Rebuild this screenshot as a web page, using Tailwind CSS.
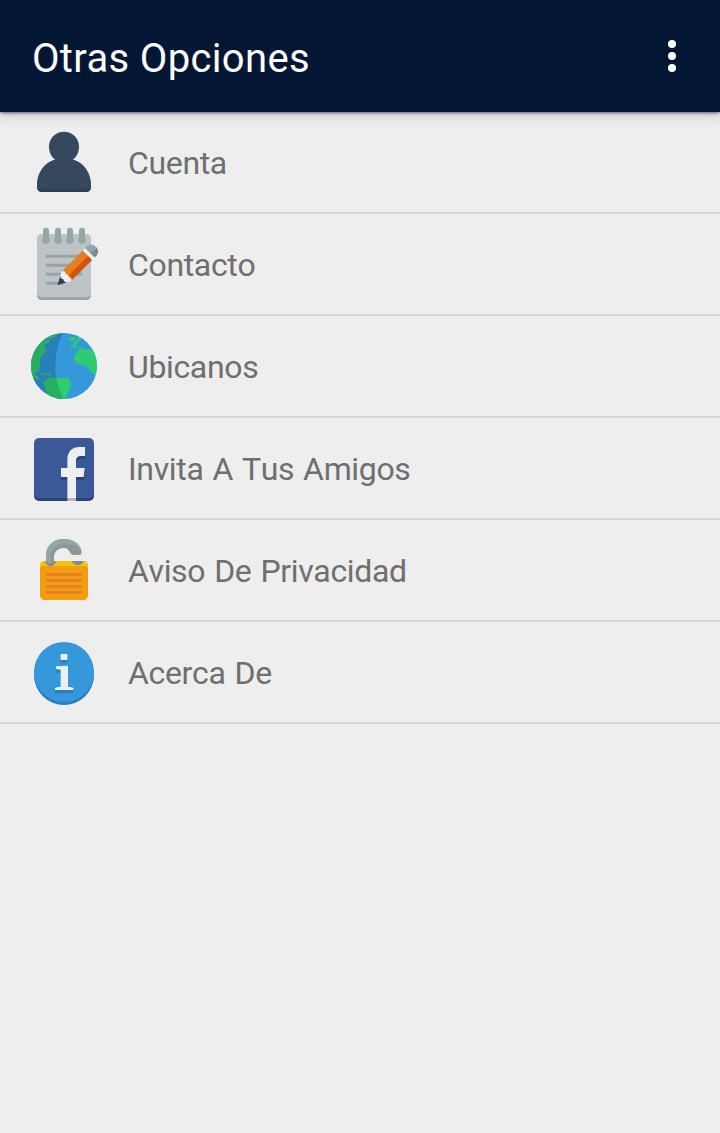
<!DOCTYPE html>
<html lang="es">
<head>
    <meta charset="UTF-8">
    <meta name="viewport" content="width=device-width, initial-scale=1.0">
    <title>Otras Opciones</title>
    <script src="https://cdn.jsdelivr.net/npm/@tailwindcss/browser@4"></script>
</head>
<body class="bg-[#eeeeee] min-h-screen font-['Roboto',sans-serif]">

    <!-- App bar -->
    <header class="relative h-28 bg-[#031633] flex items-center justify-between pl-8 pr-11 shadow-[0_1px_3px_rgba(0,0,0,0.55),0_4px_12px_rgba(0,0,0,0.15)]">
        <h1 class="text-[40px] leading-none tracking-[0.35px] text-white pt-1.5">Otras Opciones</h1>
        <button class="flex flex-col gap-1" aria-label="Menú">
            <span class="size-2 rounded-full bg-white"></span>
            <span class="size-2 rounded-full bg-white"></span>
            <span class="size-2 rounded-full bg-white"></span>
        </button>
    </header>

    <!-- Options -->
    <ul class="text-[32px] leading-none tracking-[-0.35px] [word-spacing:1.4px] [font-kerning:none] text-[#6f6f6f]">
        <li class="h-[102px] border-b-2 border-[#d6d6d6] flex items-center gap-6 pl-6">
            <svg class="size-20" viewBox="0 0 240 240">
                <path fill="#2c3e50" d="M39 196C39 155 62 122 90 114H150C178 122 201 155 201 196Q201 210 187 210H53Q39 210 39 196Z"/>
                <path fill="#34495e" d="M39 189C39 152 60 122 93 113C82 104 75 90 75 74A45 45 0 0 1 165 74C165 90 158 104 147 113C180 122 201 152 201 189Q201 202 188 202H52Q39 202 39 189Z"/>
            </svg>
            <span class="pt-0.5">Cuenta</span>
        </li>
        <li class="h-[102px] border-b-2 border-[#d6d6d6] flex items-center gap-6 pl-6">
            <svg class="size-20" viewBox="0 0 240 240">
                <rect x="39" y="36" width="162" height="192" rx="14" fill="#95a5a6"/>
                <rect x="39" y="30" width="162" height="190" rx="14" fill="#bdc3c7"/>
                <g fill="#a2acb0">
                    <circle cx="66" cy="48" r="12"/><circle cx="102" cy="48" r="12"/><circle cx="138" cy="48" r="12"/><circle cx="174" cy="48" r="12"/>
                </g>
                <path stroke="#95a5a6" stroke-width="18" stroke-linecap="round" d="M66 20V47M102 20V47M138 20V47M174 20V47"/>
                <path stroke="#95a5a6" stroke-width="9" d="M66 97H174M66 124H174M66 151H174M66 178H120"/>
                <!-- pencil, drawn flat with the tip at the origin -->
                <g transform="translate(100 184) rotate(-45)">
                    <path fill="#ecf0f1" d="M0 0L36 -19H54V19H36Z"/>
                    <path fill="#2c3e50" d="M0 0L27 -14Q20 -6 26 0Q20 6 27 14Z"/>
                    <path fill="#e67e22" d="M40 -20Q49 -14 41 -6Q49 0 41 6L128 5V-20Z"/>
                    <path fill="#d35400" d="M44 3Q49 7 41 8Q49 14 40 20H128V3Z"/>
                    <path fill="#ecf0f1" d="M128 -20H138V20H128Z"/>
                    <path fill="#95a5a6" d="M138 -20H148Q164 -17 164 4H138Z"/>
                    <path fill="#7f8c8d" d="M138 3H164Q162 17 148 20H138Z"/>
                </g>
            </svg>
            <span class="pt-0.5">Contacto</span>
        </li>
        <li class="h-[102px] border-b-2 border-[#d6d6d6] flex items-center gap-6 pl-6">
            <svg class="size-20" viewBox="0 0 240 240">
                <clipPath id="globe"><circle cx="120" cy="120" r="99"/></clipPath>
                <g clip-path="url(#globe)">
                    <path fill="#3498db" d="M0 0H240V240H0Z"/>
                    <path fill="#2980b9" d="M0 0H130C84 58 82 178 126 240H0Z"/>
                    <path fill="#27ae60" d="M20 145V95L55 40L78 36L74 52L62 54L63 70L70 75L53 88L46 104L51 119L43 126L49 136L37 134L34 148L44 153L49 166L34 158Z"/>
                    <path fill="#27ae60" d="M46 146L60 140L82 145L81 149L59 146ZM71 31L88 23L105 20L96 32L80 39Z"/>
                    <path fill="#27ae60" d="M58 170L68 158L83 154L105 156C108 180 115 203 125 222L95 224L70 206L64 190Z"/>
                    <path fill="#2ecc71" d="M97 155L133 156L141 171L139 187L131 204L120 224C108 202 101 178 97 155Z"/>
                    <path fill="#2ecc71" d="M132 38L142 33L153 33L155 40L144 47ZM157 20L167 29L172 43L163 44L155 57L161 62L154 68L149 62L139 68L141 57L148 59L151 48L162 36Z"/>
                    <path fill="#2ecc71" d="M166 65L177 65L183 72L192 68L202 70L222 90V142L210 145L204 139L194 128L183 118L164 115L152 105L149 92L160 78Z"/>
                </g>
            </svg>
            <span class="pt-0.5">Ubicanos</span>
        </li>
        <li class="h-[102px] border-b-2 border-[#d6d6d6] flex items-center gap-6 pl-6">
            <svg class="size-20" viewBox="0 -6 240 240">
                <rect x="30" y="33" width="180" height="180" rx="15" fill="#2d4374"/>
                <rect x="30" y="24" width="180" height="180" rx="15" fill="#3b5998"/>
                <path fill="#2d4374" d="M130 213V150H111V123H130V99C130 74 144 60 166 60H183V87H171Q156 87 156 101V123H182L179 150H156V213Z"/>
                <path fill="#ecf0f1" d="M130 204V141H111V114H130V90C130 65 144 51 166 51H183V78H171Q156 78 156 92V114H182L179 141H156V204Z"/>
                <path fill="#b0b6bb" d="M130 204H156V213H130Z"/>
            </svg>
            <span class="pt-0.5">Invita A Tus Amigos</span>
        </li>
        <li class="h-[102px] border-b-2 border-[#d6d6d6] flex items-center gap-6 pl-6">
            <svg class="size-20" viewBox="0 0 240 240">
                <rect x="48" y="100" width="144" height="110" rx="14" fill="#f39c12"/>
                <path fill="#f1c40f" d="M48 116V106Q48 93 61 93H179Q192 93 192 106V116Q192 108 180 108H60Q48 108 48 116Z"/>
                <path fill="#7f8c8d" d="M63 93H96Q92 108 79 108Q67 108 63 93ZM144 93H179Q174 105 162 105Q149 105 144 93Z"/>
                <path fill="#8b9999" d="M66 95V76C67 44 91 27 120 27C149 27 171 44 173 67Q173 75 165 75H147Q141 75 138 67C134 58 129 54 120 54C102 54 90 65 90 82V95Q87 102 79 102Q69 102 66 95Z"/>
                <path fill="#95a5a6" d="M66 93V76C67 44 91 27 120 27C148 27 168 42 173 64C162 48 142 41 120 41C97 42 79 57 79 82V101Q69 100 66 93Z"/>
                <path stroke="#e67e22" stroke-width="8" stroke-linecap="round" d="M70 133H170M70 151H170M70 169H170M70 187H170"/>
            </svg>
            <span class="pt-0.5">Aviso De Privacidad</span>
        </li>
        <li class="h-[102px] border-b-2 border-[#d6d6d6] flex items-center gap-6 pl-6">
            <svg class="size-20" viewBox="0 -6 240 240">
                <circle cx="120" cy="123" r="90" fill="#2980b9"/>
                <circle cx="120" cy="114" r="90" fill="#3498db"/>
                <path fill="#2980b9" d="M110 69H130V87H110ZM96 105H132V168H148V177H93V168H111V116H96Z"/>
                <path fill="#ecf0f1" d="M110 60H130V78H110ZM96 97L132 95V158L148 161V168H93V161L110 158V107L96 105Z"/>
            </svg>
            <span class="pt-0.5">Acerca De</span>
        </li>
    </ul>

</body>
</html>
